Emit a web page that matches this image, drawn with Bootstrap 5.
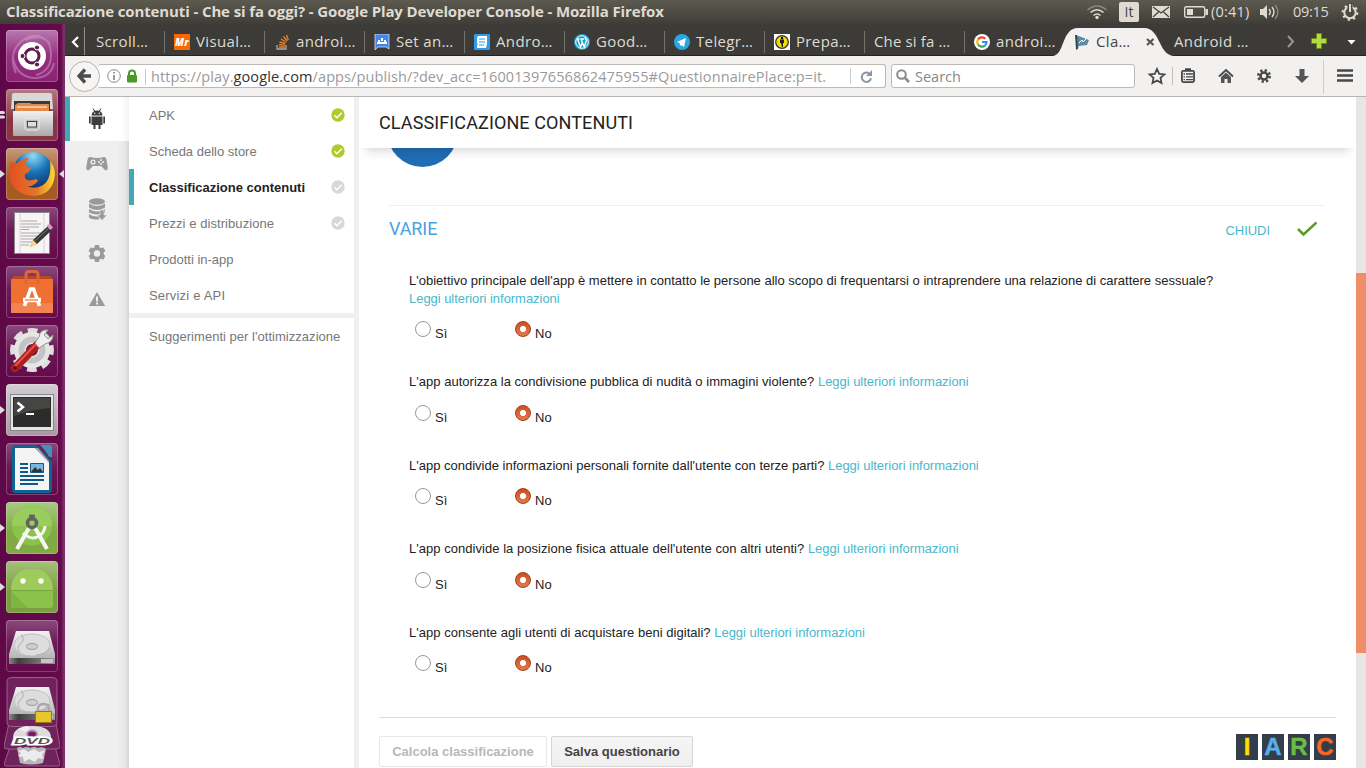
<!DOCTYPE html>
<html lang="it">
<head>
<meta charset="utf-8">
<meta name="viewport" content="width=device-width, initial-scale=1">
<title>Classificazione contenuti - Che si fa oggi?</title>
<link href="https://cdn.jsdelivr.net/npm/bootstrap@5.3.0/dist/css/bootstrap.min.css" rel="stylesheet">
<style>
body{width:1366px;height:768px;overflow:hidden;font-family:"Liberation Sans",Arial,sans-serif;font-size:13px;line-height:18px;color:#222;background:#fff}
svg{display:block;flex:none}
.ui-font{font-family:"Open Sans","Noto Sans",sans-serif}
.topbar{height:24px;background:linear-gradient(#5d5a50,#3e3d38);color:#dfdbd2;font-size:15px;line-height:24px}
.topbar .title{font-weight:700;font-size:15px;padding-left:6px;letter-spacing:-.12px;width:1088px;margin-top:-1px}
.tray-time{letter-spacing:-.1px;font-size:14.5px}
.lang{width:20px;height:20px;background:#dfdbd2;color:#44423c;border-radius:2px;font-size:14px;line-height:20px;text-align:center}
.launcher{width:65px;background:linear-gradient(90deg,#5f0847,#650a4c 94%,#7c3166 98%);padding:6px 0 0 6px;gap:7px}
.tile{width:52px;height:52px;border-radius:4px;background:linear-gradient(#8a4a7b,#6b1a56 45%,#650a4c);box-shadow:inset 0 0 0 1px rgba(255,255,255,.22)}
.tile>svg{position:absolute;left:0;top:0}
.pip-l::before,.pip-r::after{content:"";position:absolute;top:22px;border:4px solid transparent}
.pip-l::before{left:-6px;border-left:5px solid #ddd;border-right:0}
.pip-r::after{left:53px;border-right:5px solid #ddd;border-left:0}
.tabs{height:32px;background:#3c3b37;border-bottom:1px solid #24231f;color:#dfdbd2;font-size:15px;letter-spacing:.35px}
.tabx{width:100px;height:31px;padding-left:9px;gap:6px;position:relative;white-space:nowrap;flex:none}
.tabx::after{content:"";position:absolute;right:0;top:7px;height:22px;width:1px;background:#75736c}
.tabx.plain::after{display:none}
.tabx.first{width:80px;padding-left:11px}
.tabx .active-bg{position:absolute;left:-13px;top:4px}
.tabx>*{position:relative}
.tabx>span,.tab-last{top:1px;position:relative}
.tabx>svg:not(.active-bg){top:2px}
.nav-row{height:41px;background:#f2f1f0;border-bottom:1px solid #b9b6b2}
.field{height:24px;background:#fff;border:1px solid #bcb9b5;border-radius:3px}
.field>span,.field>em{position:relative;top:1px;font-style:normal}
.url{width:788px;padding-left:9px;color:#9a9a9a;font-size:14.5px}
.url b{font-weight:400;color:#333}
.back{width:31px;height:31px;border-radius:50%;border:1px solid #b5b2ae;background:#f6f5f4;margin-left:4px;margin-right:-2px;position:relative;z-index:1}
.rail{width:64px;background:linear-gradient(90deg,#efefef 52px,#e6e6e6 60px,#d6d6d6)}
.rail .on{height:44px;background:linear-gradient(90deg,#fff 52px,#f4f4f4);border-left:5px solid #41aab8}
.side{width:230px;border-right:5px solid #f0f0f0;color:#777}
.side a{height:36px;padding:2px 9px 0 20px;color:#777;text-decoration:none}
.side a svg{margin-top:-2px;margin-right:-1px}
.side a.current{font-weight:700;color:#222;border-left:5px solid #41aab8;padding-left:15px}
.side a.extra{height:38px;padding-top:0;letter-spacing:.03px}
.side hr{margin:0;border:0;height:5px;background:#f0f0f0;opacity:1}
.pane-head{height:51px;padding-left:20px;font:400 18px/51px Roboto,sans-serif;z-index:2;letter-spacing:.11px}
.pane-head::after{content:"";position:absolute;left:0;right:0;top:51px;height:12px;background:linear-gradient(rgba(0,0,0,.12),rgba(0,0,0,.04) 50%,transparent);-webkit-mask-image:linear-gradient(90deg,transparent,#000 14px,#000 983px,transparent);mask-image:linear-gradient(90deg,transparent,#000 14px,#000 983px,transparent)}
.disc{width:71px;height:71px;border-radius:50%;background:#216db5;margin:-52px 0 0 27.5px}
.section{width:936px;margin-left:30px;margin-top:38px;border-top:1px solid #eee;height:48px}
.section h2{font:400 18px/46px Roboto,sans-serif;color:#4a9fdf;margin:0;letter-spacing:-.1px}
.lk{color:#4ab7cb;text-decoration:none;letter-spacing:-.04px}
.questions{margin:18.9px 0 0 50px}
.q p{margin:0}
.q{margin-bottom:25.5px}
.q.shared p{letter-spacing:.025px}
.opts{height:40px;padding:13.3px 0 0 6px}
.opt{width:100px;gap:4px;height:16px}
.opt span{position:relative;top:5px;line-height:16px}
.rd{width:16px;height:16px;margin:0;border-radius:50%;border:1px solid #999;background:#fff;appearance:none}
.rd:checked{border:1px solid #a63d17;background:radial-gradient(circle,#fff 0 2.7px,transparent 3.4px),linear-gradient(#cb4f20,#e37a50)}
.foot{margin:0 20px 0 20px;border-top:1px solid #dcdcdc;padding-top:16px;height:51px}
.bt{height:31px;border:1px solid #d6d6d6;border-radius:2px;font-size:13px;font-weight:700;line-height:29px;padding:0;color:#444;background:linear-gradient(#f5f5f5,#efefef);margin-top:2px}
.bt.off{color:#b8b8b8;background:#fff;border-color:#e8e8e8}
.sq{width:22px;height:26px;background:#333e4a;font-weight:700;font-size:24px;line-height:26px;text-align:center;-webkit-text-stroke:.4px currentColor}
.scroll{width:10px;background:#e6e6e6;padding-top:176px}
.scroll div{height:380px;background:#f08e66}
</style>
</head>
<body class="d-flex flex-column">
<svg width="0" height="0" class="position-absolute">
<defs>
<linearGradient id="metal" x2="0" y2="1"><stop stop-color="#f2f2f2"/><stop offset="1" stop-color="#a8a8a8"/></linearGradient>
<linearGradient id="edge"><stop stop-color="#888b86"/><stop offset=".2" stop-color="#3c3e3b"/><stop offset="1" stop-color="#999"/></linearGradient>
<g id="disk"><path d="M10 12h33l6 23v8c0 2-1 2-2 2H5c-1 0-2 0-2-2v-8z" fill="url(#metal)"/><path d="M3 39h46v4q0 2-2 2H5q-2 0-2-2z" fill="url(#edge)"/><path d="M35 40h12v4H35z" fill="#c5c5c5"/><ellipse cx="26" cy="26" rx="18" ry="11" fill="#ddd" stroke="#c0c0c0"/><ellipse cx="26" cy="27.500" rx="5.500" ry="3" fill="#d0d0d0" stroke="#999"/><path d="M15 15q5 6-1 10-4 4 0 8M44 29q-5 7-14 7" fill="none" stroke="#b0b0b0"/></g>
<g id="ok"><circle cx="7" cy="7" r="6.700"/><path d="M3.500 7.300l2.400 2.400 4.900-5" fill="none" stroke="#fff" stroke-width="1.500"/></g>
<g id="so"><path d="M1 11v4h9v-4" fill="none" stroke="#aaa" stroke-width="1.300"/><path d="M3 13h6M3 10.600l6 .6M3.500 8l5.800 1.600M5 5l5 3.200M7.500 2.500l3.800 4.500M10.500 1l1.800 5" stroke="#f48024" stroke-width="1.300"/></g>
</defs>
</svg>

<header class="topbar ui-font d-flex position-relative">
<div class="title text-nowrap">Classificazione contenuti - Che si fa oggi? - Google Play Developer Console - Mozilla Firefox</div>
<div class="d-flex align-items-center">
<svg width="20" height="16" viewBox="0 0 20 16" fill="none" stroke-width="1.500" style="margin-left:-1px"><path d="M.5 6q9.500-8 19 0" stroke="#8b887f"/><path d="M3.500 8.500q6.500-5.500 13 0M6.500 11.500q3.500-3 7 0" stroke="#dfdbd2"/><circle cx="10" cy="13.500" r="1" fill="#dfdbd2" stroke="#dfdbd2"/></svg>
<div class="lang" style="margin-left:12px">It</div>
<svg width="18" height="12" viewBox="0 0 18 12" style="margin-left:13px"><path fill="#dfdbd2" d="M0 0h18v12H0z"/><path d="M1 1l8 6 8-6M1 11l5.500-5M17 11l-5.500-5" stroke="#44423c" fill="none" stroke-width="1.300"/></svg>
<svg width="24" height="12" viewBox="0 0 24 12" style="margin-left:14px"><rect x=".7" y=".7" width="20" height="10.600" rx="1.500" fill="none" stroke="#dfdbd2" stroke-width="1.400"/><path fill="#dfdbd2" d="M3 3h6v6H3zM21.500 3H24v6h-2.500z"/></svg>
<div class="tray-time" style="margin-left:3px;width:49px;letter-spacing:.2px">(0:41)</div>
<svg width="20" height="16" viewBox="0 0 20 16" fill="none" stroke="#dfdbd2" stroke-width="1.400"><path d="M0 5h3l4-4v14l-4-4H0z" fill="#dfdbd2" stroke="none"/><path d="M9 5q2.500 3 0 6M12 3q4 5 0 10"/><path d="M15 1q6 7 0 14" stroke="#8b887f"/></svg>
<div class="tray-time" style="margin-left:13px;width:48px;letter-spacing:-.3px">09:15</div>
<svg width="18" height="18" viewBox="0 0 18 18" fill="none" stroke="#dfdbd2"><circle cx="9" cy="9.500" r="5.700" stroke-width="2"/><circle cx="9" cy="9.500" r="7.300" stroke-width="2.200" stroke-dasharray="2.300 3.430"/><path d="M9 0v9" stroke="#4c4a43" stroke-width="5"/><path d="M9 1v8" stroke-width="2"/></svg>
</div>
</header>

<div class="d-flex flex-grow-1 overflow-hidden">
<aside class="launcher d-flex flex-column flex-shrink-0">
<div class="tile position-relative flex-shrink-0" style="background:linear-gradient(#b878ae,#94307f 50%,#8b2373)"><svg width="52" height="52"><g fill="none" stroke="#d9a6d0" stroke-opacity=".45" stroke-width="2"><path d="M10 43q-9-21 7-33 15-10 27 4M7 28q4 20 23 20 15-1 18-15M19 10q26-10 26 15 0 16-15 20"/></g><circle cx="26" cy="26" r="14" fill="#fff"/><circle cx="26" cy="26" r="7" fill="none" stroke="#5f1b4d" stroke-width="3"/><g fill="#5f1b4d" stroke="#fff"><circle cx="16.500" cy="26" r="2.500"/><circle cx="31" cy="17.500" r="2.500"/><circle cx="31" cy="34.500" r="2.500"/></g></svg></div>
<div class="tile position-relative flex-shrink-0" style="background:linear-gradient(#b57a80,#8a3545 60%)"><svg width="52" height="52" style="overflow:visible"><path d="M-6 22h3q2 0 2 1.500T-3 25h-3zm0 4.500h3q2 0 2 1.500t-2 1.500h-3z" fill="#ddd"/><path d="M6 6q0-2 2-2h36q2 0 2 2l1 14H5z" fill="#d8d8d6"/><path d="M8 12h36v12H8z" fill="#3a3936"/><path d="M9 16l3-2h12l2 1h17v8H9z" fill="#e38846"/><path d="M11 18h30" stroke="#fff"/><path d="M7 22h40v24q0 1-1 1H8q-1 0-1-1z" fill="url(#metal)"/><rect x="19" y="30" width="14" height="11" rx="2" fill="#bbb" stroke="#eee"/><rect x="21.500" y="32.500" width="9" height="5.500" fill="#ddd" stroke="#444"/></svg></div>
<div class="tile pip-l pip-r position-relative flex-shrink-0" style="background:linear-gradient(#c69a7b,#a55d28 55%,#a55b22)"><svg width="52" height="52"><defs><radialGradient id="globe" cx=".5" cy=".1" r=".8"><stop stop-color="#8fdcf7"/><stop offset=".5" stop-color="#1b73b8"/><stop offset="1" stop-color="#12356c"/></radialGradient><linearGradient id="fox"><stop stop-color="#df5120"/><stop offset=".6" stop-color="#e8742a"/><stop offset="1" stop-color="#fbdc36"/></linearGradient></defs><circle cx="27" cy="24" r="20" fill="url(#globe)"/><path d="M5 13q2 3 6 2 6-5 12-5-4 4-3 8l5 2q-1 4-6 6-1 4 2 6 4 1 9-1 3 2 1 3-4 5-10 4 8 4 16-1 9-6 7-24 7 9 4 19-4 15-20 16Q9 47 4 32 2 20 5 13z" fill="url(#fox)"/></svg></div>
<div class="tile position-relative flex-shrink-0"><svg width="52" height="52"><path d="M8.500 5.500h35v41h-35z" fill="#f5f5f5" stroke="#888"/><path d="M14 6v40M38 6v40" stroke="#e9c9d0"/><path d="M15 14h16M15 17h20M15 20h18M15 22.500h8M15 26h20M15 29h18M15 32h18M15 35h16M15 38h8" stroke="#a8a8a8"/><path d="M24 40l3-7 15-14 4 4-15 14z" fill="#383838"/><path d="M23.500 40.500l3-8 5 5z" fill="#efd88f"/><path d="M40.500 19l3-2.500 3.500 4-2.500 2.500z" fill="#dc9abe"/><path d="M29 34l14-13" stroke="#777"/></svg></div>
<div class="tile position-relative flex-shrink-0"><svg width="52" height="52"><path d="M5 14l3-4h37l2 4z" fill="#b94922"/><path d="M5 13h42v34H5z" fill="#ee7133"/><path d="M5 37h42v10H5z" fill="#f18350"/><path d="M20 18V8.500q0-3 3-3h6q3 0 3 3V18" fill="none" stroke="#e0663a" stroke-width="3"/><path d="M18.500 40l6-17h3l6 17" fill="none" stroke="#fff" stroke-width="3.600"/><path d="M17 34h18" stroke="#fff" stroke-width="4.500"/><path d="M19 34h13" stroke="#ee7133" stroke-width="1.200"/></svg></div>
<div class="tile position-relative flex-shrink-0"><svg width="52" height="52"><circle cx="26" cy="25" r="18.500" fill="none" stroke="#dedede" stroke-width="7" stroke-dasharray="9 5.530" transform="rotate(-14 26 25)"/><circle cx="26" cy="25" r="12" fill="none" stroke="#e6e6e6" stroke-width="12"/><circle cx="26" cy="25" r="10.500" fill="none" stroke="#c4c4c4" stroke-width="6"/><path d="M9 43l22-23" stroke="#b21d1d" stroke-width="8" stroke-linecap="round"/><path d="M9 41l21-22" stroke="#df5650" stroke-width="2"/><path d="M29 18l4 5 6-4q8-2 8-9l-5 4-4-4 4-5q-8-1-9 7z" fill="#eee" stroke="#999"/><circle cx="9" cy="43" r="1.800" fill="#561111"/></svg></div>
<div class="tile pip-l position-relative flex-shrink-0" style="background:linear-gradient(#d5cdd3,#a899a5)"><svg width="52" height="52"><rect x="4.500" y="10.500" width="43" height="36" fill="#e4e4e4" stroke="#888"/><path d="M7 13h38v30H7z" fill="#2c2d2b"/><path d="M8 14h36v10q-17 1-36 8z" fill="#444644"/><path d="M11.500 18.500l5.500 4.500-5.500 4.500" fill="none" stroke="#fff" stroke-width="2.500"/><path d="M20 30h8" stroke="#fff" stroke-width="2"/></svg></div>
<div class="tile position-relative flex-shrink-0"><svg width="52" height="52"><path d="M10 2h21l15 16v28q0 4-3 4H9q-3 0-3-4V6q0-4 4-4z" fill="#0d6393"/><path d="M31 2h15v16z" fill="#6d1c5c"/><path d="M34 2h10q2 0 2 2v10q-3 1-4-2-4-6-8-10z" fill="#4292b9"/><path d="M9 5h20l14 14v28H9z" fill="#f4f4f4"/><path d="M29 5l14 15V18L32 5z" fill="#aaa"/><path d="M14 21h8M14 25h8M14 29h8M14 33h24M14 37h24M14 41h18" stroke="#0d5a86" stroke-width="2"/><path d="M24.500 20.500h13v9h-13z" fill="#75b7df" stroke="#175680"/><path d="M25 29l4-5 3 3 2-2 3 4z" fill="#333"/></svg></div>
<div class="tile pip-l position-relative flex-shrink-0" style="background:linear-gradient(#a9c784,#81a944 60%)"><svg width="52" height="52"><circle cx="26" cy="23.500" r="20" fill="#8bc34a"/><path d="M6 24a20 20 0 0 1 40 0z" fill="#99ce5d"/><path d="M24 24L11 47M28 24l13 23" stroke="#f6f6f6" stroke-width="4"/><path d="M17 31q8 8 16 3 6-4 6-10" stroke="#f6f6f6" stroke-width="3" fill="none"/><path d="M23 12.500h6v6h-6z" fill="#666"/><circle cx="26" cy="21" r="4.500" fill="none" stroke="#626262" stroke-width="3.500"/></svg></div>
<div class="tile pip-l position-relative flex-shrink-0" style="background:linear-gradient(#a5c07b,#7c9d43 60%)"><svg width="52" height="52"><path d="M15 12l-5-8M37 12l5-8" stroke="#91c153" stroke-width="2"/><path d="M5 29Q6 8 26 8t21 21z" fill="#9dcc5d"/><path d="M5 29h42v15q0 3-3 3H8q-3 0-3-3z" fill="#8bc34a"/><path d="M5 29.500h42" stroke="#75a83c"/><path d="M5 30l17 17H8q-3 0-3-3z" fill="#80b543"/><circle cx="17" cy="20" r="2.700" fill="#fff"/><circle cx="35" cy="20" r="2.700" fill="#fff"/></svg></div>
<div class="tile position-relative flex-shrink-0"><svg width="52" height="52"><use href="#disk" y="-1"/></svg></div>
<svg width="56" height="91" viewBox="-2 0 56 91" style="margin:-2px 0 0 -2px">
<g fill="#6f225b" stroke="#9a6088"><path d="M4 70h45l5 17q0 2-2 2H0q-2 0-2-2z"/><path d="M3 46h47l4 23q0 3-3 3H1q-3 0-3-3z"/><rect x="1" y=".5" width="50" height="49" rx="4"/></g>
<path d="M11 71q3-2 6 0 4-2 7 0 4-2 8 0 5-2 8 1l-3 14q-12 3-23 0z" fill="#b8b8b8"/><path d="M12 74l6-2 4 3 6-3 5 3 6-2-3 5 2 4-6-1-3 4-6-3-5 3-1-5-5-1 3-3z" fill="#ececec"/>
<use href="#disk" y="-2"/><g><path d="M32 37v-5q0-5 5.500-5t5.500 5v5" fill="none" stroke="#aaa" stroke-width="2.500"/><path d="M29.500 34.500h16v11h-16z" fill="#e9c72b" stroke="#967b09"/></g>
<path d="M7 61q0-12 19-12t19 12z" fill="#ddd"/><path d="M26 57L12 52q5-3 10-3z" fill="#f7ebf6"/><ellipse cx="26" cy="57" rx="5" ry="3.500" fill="#7a1b63" stroke="#b78eb0" stroke-width="2"/>
<text x="8" y="67" font-family="Liberation Sans" font-weight="700" font-style="italic" font-size="8.500" textLength="36" lengthAdjust="spacingAndGlyphs" fill="#555" stroke="#fff" stroke-width="3" paint-order="stroke">DVD</text>
</svg>
</aside>

<div class="d-flex flex-column flex-grow-1">
<div class="tabs ui-font d-flex align-items-center flex-shrink-0">
<svg width="20" height="31" viewBox="0 0 20 31"><path d="M13 13l-5 5 5 5" fill="none" stroke="#fff" stroke-width="2.200"/><path d="M19.500 3v28" stroke="#908e87"/></svg>
<div class="tabx first d-flex align-items-center"><span>Scroll…</span></div>
<div class="tabx d-flex align-items-center"><svg width="16" height="16"><path fill="#f60" d="M0 0h16v16H0z"/><text x="1" y="12" font-size="10" font-weight="800" font-style="italic" fill="#fff" textLength="14" lengthAdjust="spacingAndGlyphs">Mr</text></svg><span>Visual…</span></div>
<div class="tabx d-flex align-items-center"><svg width="16" height="16"><use href="#so" x="2"/></svg><span>androi…</span></div>
<div class="tabx d-flex align-items-center"><svg width="16" height="16"><path d="M1 0h14v15l-3-2H4l-3 3z" fill="#4585ef" stroke="#eee" stroke-width=".7"/><path d="M3 10V8h10v2zM7 4h2v3H7zM4 6h2v2H4zM10 6h2v2h-2z" fill="#fff"/></svg><span>Set an…</span></div>
<div class="tabx d-flex align-items-center"><svg width="16" height="16"><rect width="16" height="16" rx="1" fill="#319aea"/><path d="M4 2h9v8l-1 4H3v-3h1L3 9V4z" fill="#fff"/><path d="M5 5h6M5 8h6M5 11h5" stroke="#319aea" stroke-width="1.200"/></svg><span>Andro…</span></div>
<div class="tabx d-flex align-items-center"><svg width="16" height="16"><circle cx="8" cy="8" r="8" fill="#19a0c8"/><circle cx="8" cy="8" r="6.300" fill="none" stroke="#fff"/><path d="M2.500 5h3M6.500 5H10M3.500 5l3 8 2-5M7 5l3.300 8L12.500 6q-2-1.500-1-3" fill="none" stroke="#fff" stroke-width="1.400"/></svg><span>Good…</span></div>
<div class="tabx d-flex align-items-center"><svg width="16" height="16"><circle cx="8" cy="8" r="8" fill="#2ca5e0"/><path d="M3 8l9-4-2 9-3-2-1 1-.3-3z" fill="#fff"/></svg><span>Telegr…</span></div>
<div class="tabx d-flex align-items-center"><svg width="16" height="16"><path fill="#fff" d="M0 0h16v16H0z"/><circle cx="8" cy="8" r="6.300" fill="#f3df00" stroke="#333" stroke-width="1.300"/><circle cx="8" cy="4" r="1.200"/><path d="M6 5.500h4V9H9v4H8V9.500L7 13V9H6z" fill="#222"/></svg><span>Prepa…</span></div>
<div class="tabx d-flex align-items-center"><span style="letter-spacing:.15px">Che si fa …</span></div>
<div class="tabx plain d-flex align-items-center"><svg width="16" height="16"><circle cx="8" cy="8" r="8" fill="#fff"/><g fill="none" stroke-width="2.200"><path d="M11.300 4.700A4.700 4.700 0 0 0 4 5.500" stroke="#ea4335"/><path d="M4 5.500a4.700 4.700 0 0 0 0 5" stroke="#fbbc05"/><path d="M4 10.500a4.700 4.700 0 0 0 7 1.100" stroke="#34a853"/><path d="M11 11.600Q12.500 10 12.600 8H8" stroke="#4285f4"/></g></svg><span>androi…</span></div>
<div class="tabx plain d-flex align-items-center" style="color:#444"><svg class="active-bg" width="126" height="28" viewBox="0 0 126 28"><path d="M0 28C13 28 9 0 26 0h66c17 0 14 28 31 28z" fill="#f2f1f0"/></svg><svg width="16" height="16"><path d="M2 1l13 5-2 5L5 12l-2 4H2z" fill="#5c8ba5"/><path d="M1 1h2l1 14H2z" fill="#37474f"/><path d="M5 9l3-3 1 2 3-3" stroke="#fff" fill="none"/></svg><span style="width:43px">Cla…</span><svg width="9" height="8" style="margin-left:1px"><path d="M1 1l6.500 6M7.500 1L1 7" stroke="#555" stroke-width="2.200"/></svg></div>
<span class="text-nowrap tab-last" style="width:112px;padding-left:9px">Android …</span>
<svg width="89" height="31"><path d="M11 12l5 5.500-5 5.500" fill="none" stroke="#999" stroke-width="2"/><path d="M39.500 9.500h5v5h5v5h-5v5h-5v-5h-5v-5h5z" fill="#b4d941" stroke="#638c14"/><path d="M70.500 16h8l-4 4.500z" fill="#fff"/></svg>
</div>

<div class="nav-row ui-font d-flex align-items-center flex-shrink-0">
<div class="back d-flex align-items-center justify-content-center flex-shrink-0"><svg width="16" height="16"><path d="M8 1.500L2 8l6 6.500M2 8h12" fill="none" stroke="#4d4d4d" stroke-width="3.400"/></svg></div>
<div class="field url d-flex align-items-center flex-shrink-0 border-start-0">
<svg width="14" height="14"><circle cx="7" cy="7" r="6.300" fill="none" stroke="#888"/><path d="M7 6v5M7 3v1.600" stroke="#777" stroke-width="1.500"/></svg>
<svg width="12" height="14" style="margin-left:5px"><path d="M3 7V4.500a3 3 0 0 1 6 0V7" fill="none" stroke="#4a9a25" stroke-width="2"/><rect x="1" y="6" width="10" height="7.500" rx="1" fill="#4a9a25"/></svg>
<span class="text-nowrap" style="border-left:1px solid #ccc;margin-left:7px;padding-left:5px;line-height:16px;width:705px;letter-spacing:.11px">https://play.<b>google.com</b>/apps/publish/?dev_acc=16001397656862475955#QuestionnairePlace:p=it.</span>
<svg width="32" height="16"><path d="M.5 0v16" stroke="#ccc"/><path d="M19 5.300a4.700 4.700 0 1 0 2 5" fill="none" stroke="#8797a5" stroke-width="2"/><path d="M22 2v6h-6z" fill="#8797a5"/></svg>
</div>
<div class="field d-flex align-items-center flex-shrink-0" style="width:244px;margin-left:5px;padding-left:4px;gap:5px;color:#888;font-size:14.5px"><svg width="14" height="14"><circle cx="5.500" cy="5.500" r="4.300" fill="none" stroke="#8a8a8a" stroke-width="2"/><path d="M9 9l4 4" stroke="#8a8a8a" stroke-width="2.500"/></svg><em>Search</em></div>
<svg width="231" height="40" viewBox="0 0 231 40"><g fill="none" stroke="#484848"><path d="M22 13l2.200 4.800 5.200.6-3.900 3.500 1 5.200-4.500-2.600-4.500 2.600 1-5.200-3.900-3.500 5.200-.6z" stroke-width="1.800"/><path d="M37.500 11v18" stroke="#c4c2be"/><rect x="46.900" y="14.900" width="12.200" height="11.200" rx="1.500" stroke-width="1.800"/><path d="M50 13.500h6" stroke-width="2.500"/><path d="M48.500 18h1.500m1 0h7M48.500 20.800h1.500m1 0h7M48.500 23.600h1.500m1 0h7" stroke-width="1.300"/><path d="M84 20.500l7-6.500 7 6.500" stroke-width="1.800"/><path d="M86 21l5-4.500 5 4.500v6h-3.500v-4h-3v4H86z" fill="#555" stroke="none"/><circle cx="129" cy="20" r="3.500" stroke-width="2.500"/><circle cx="129" cy="20" r="5.500" stroke-width="3" stroke-dasharray="2.160 2.160"/><path d="M164.500 13h5v7h4.500l-7 7-7-7h4.500z" fill="#555" stroke="none"/><path d="M188.500 4v34" stroke="#cfcdca"/><path d="M202 14.500h16M202 19.500h16M202 24.500h16" stroke-width="2.600"/></g></svg>
</div>

<div class="d-flex flex-grow-1 overflow-hidden">
<nav class="rail flex-shrink-0">
<div class="on"><svg width="59" height="44" viewBox="0 -1 59 44" fill="#3d3d3d"><path d="M21.500 17.500q.5-5 5.500-5t5.500 5z"/><path d="M23 10.500l2 3M31 10.500l-2 3" stroke="#3d3d3d"/><circle cx="24.700" cy="15.300" r=".7" fill="#fff"/><circle cx="29.300" cy="15.300" r=".7" fill="#fff"/><path d="M21.500 18.500h11V27h-2v4h-2v-4h-3v4h-2v-4h-2zM19 18.500h1.700v7H19zM33.300 18.500H35v7h-1.700z"/></svg></div>
<svg width="64" height="180" viewBox="0 0 64 180" fill="#9a9a9a"><path d="M25 16q7 2 14 0 2 0 2.500 3l1.200 7q.3 4-2.700 3l-4-4h-8l-4 4q-3 1-2.700-3l1.200-7q.5-3 2.500-3z"/><g fill="#eee"><circle cx="28" cy="21" r="2.600"/><circle cx="36" cy="19" r="1"/><circle cx="36" cy="23" r="1"/><circle cx="34" cy="21" r="1"/><circle cx="38" cy="21" r="1"/></g><circle cx="28" cy="21" r="1.300"/><ellipse cx="32" cy="60.500" rx="8" ry="3.300"/><path d="M24 62.500q8 5 16 0v4q-8 5-16 0zM24 68q8 5 16 0v3.500q-8 4-16 0zM24 73.200q5 3 10 2v3.300q-7 .5-10-2z"/><path d="M35 69h4v5h3l-5 5.500-5-5.500h3z" stroke="#efefef" stroke-width=".6"/><circle cx="32" cy="112.500" r="5" fill="none" stroke="#9a9a9a" stroke-width="3.600"/><path id="cog" d="M29.800 104h4.400v4h-4.400zM29.800 117h4.400v4h-4.400z"/><use href="#cog" transform="rotate(60 32 112.500)"/><use href="#cog" transform="rotate(120 32 112.500)"/><path d="M32 151l8.200 14H23.800z"/><path d="M32 155.500v5M32 161.500v2" stroke="#efefef" stroke-width="2"/></svg>
</nav>
<nav class="side flex-shrink-0 d-flex flex-column bg-white">
<a href="#" class="d-flex align-items-center justify-content-between">APK<svg width="15" height="14" fill="#b0c92f"><use href="#ok"/></svg></a>
<a href="#" class="d-flex align-items-center justify-content-between">Scheda dello store<svg width="15" height="14" fill="#b0c92f"><use href="#ok"/></svg></a>
<a href="#" class="current d-flex align-items-center justify-content-between">Classificazione contenuti<svg width="15" height="14" fill="#d8d8d8"><use href="#ok"/></svg></a>
<a href="#" class="d-flex align-items-center justify-content-between"><span style="letter-spacing:.07px">Prezzi e distribuzione</span><svg width="15" height="14" fill="#d8d8d8"><use href="#ok"/></svg></a>
<a href="#" class="d-flex align-items-center">Prodotti in-app</a>
<a href="#" class="d-flex align-items-center"><span style="letter-spacing:.2px">Servizi e API</span></a>
<hr>
<a href="#" class="extra d-flex align-items-center text-nowrap">Suggerimenti per l'ottimizzazione</a>
</nav>
<main class="flex-grow-1 d-flex flex-column overflow-hidden bg-white">
<div class="pane-head bg-white position-relative flex-shrink-0">CLASSIFICAZIONE CONTENUTI</div>
<div class="disc flex-shrink-0"></div>
<div class="section d-flex justify-content-between flex-shrink-0"><h2>VARIE</h2><div class="d-flex align-items-center" style="padding:2px 8px 0 0"><a href="#" class="lk">CHIUDI</a><svg width="20" height="16" style="margin:-4px 0 0 27px"><path d="M1 8l5.500 5.500L19.500 1.500" fill="none" stroke="#5b9a2b" stroke-width="2.500"/></svg></div></div>
<div class="questions flex-shrink-0">
<div class="q"><p>L'obiettivo principale dell'app è mettere in contatto le persone allo scopo di frequentarsi o intraprendere una relazione di carattere sessuale?<br><a href="#" class="lk">Leggi ulteriori informazioni</a></p><div class="opts d-flex"><label class="opt d-flex"><input class="rd" type="radio" name="q1"><span>Sì</span></label><label class="opt d-flex"><input class="rd" type="radio" name="q1" checked><span>No</span></label></div></div>
<div class="q shared"><p>L'app autorizza la condivisione pubblica di nudità o immagini violente? <a href="#" class="lk">Leggi ulteriori informazioni</a></p><div class="opts d-flex"><label class="opt d-flex"><input class="rd" type="radio" name="q2"><span>Sì</span></label><label class="opt d-flex"><input class="rd" type="radio" name="q2" checked><span>No</span></label></div></div>
<div class="q"><p>L'app condivide informazioni personali fornite dall'utente con terze parti? <a href="#" class="lk">Leggi ulteriori informazioni</a></p><div class="opts d-flex"><label class="opt d-flex"><input class="rd" type="radio" name="q3"><span>Sì</span></label><label class="opt d-flex"><input class="rd" type="radio" name="q3" checked><span>No</span></label></div></div>
<div class="q shared"><p style="letter-spacing:.04px">L'app condivide la posizione fisica attuale dell'utente con altri utenti? <a href="#" class="lk">Leggi ulteriori informazioni</a></p><div class="opts d-flex"><label class="opt d-flex"><input class="rd" type="radio" name="q4"><span>Sì</span></label><label class="opt d-flex"><input class="rd" type="radio" name="q4" checked><span>No</span></label></div></div>
<div class="q shared mb-0"><p>L'app consente agli utenti di acquistare beni digitali? <a href="#" class="lk">Leggi ulteriori informazioni</a></p><div class="opts d-flex"><label class="opt d-flex"><input class="rd" type="radio" name="q5"><span>Sì</span></label><label class="opt d-flex"><input class="rd" type="radio" name="q5" checked><span>No</span></label></div></div>
</div>
<div class="foot mt-auto d-flex flex-shrink-0">
<button class="btn bt off" style="width:168px">Calcola classificazione</button>
<button class="btn bt" style="width:142px;margin-left:4px">Salva questionario</button>
<div class="d-flex ms-auto gap-1">
<div class="sq" style="color:#fd0">I</div><div class="sq" style="color:#5badea">A</div><div class="sq" style="color:#6abd45">R</div><div class="sq" style="color:#fb6620">C</div>
</div>
</div>
</main>
<div class="scroll flex-shrink-0"><div></div></div>
</div>
</div>
</div>
<script src="https://cdn.jsdelivr.net/npm/bootstrap@5.3.0/dist/js/bootstrap.bundle.min.js"></script>
</body>
</html>
